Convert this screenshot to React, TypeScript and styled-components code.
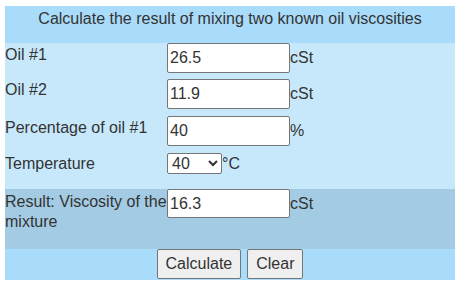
import React from "react";
import styled, { createGlobalStyle } from "styled-components";

const Global = createGlobalStyle`
  body {
    margin: 0;
    background: #ffffff;
    font-family: "Liberation Sans", Arial, sans-serif;
    font-size: 16px;
    color: #333333;
  }
`;

const Panel = styled.div`
  width: 450px;
  margin: 6px 0 0 5px;
  display: flex;
  flex-direction: column;
`;

const Header = styled.div`
  height: 37px;
  box-sizing: border-box;
  padding-top: 3px;
  background: #a9dbfa;
  text-align: center;
  line-height: 20px;
`;

const Body = styled.div`
  background: #c7e8fb;
  display: flex;
  flex-direction: column;
`;

const Row = styled.div<{ $h: number; $tone?: "result" }>`
  display: flex;
  align-items: flex-start;
  height: ${(p) => p.$h}px;
  background: ${(p) => (p.$tone === "result" ? "#a3cbe4" : "transparent")};
`;

const Label = styled.div<{ $pt?: number }>`
  width: 162px;
  flex: none;
  padding-top: ${(p) => p.$pt ?? 2}px;
  line-height: 20px;
`;

const Field = styled.div`
  display: flex;
  align-items: baseline;
`;

const Input = styled.input<{ $h?: number }>`
  width: 123px;
  height: ${(p) => p.$h ?? 30}px;
  box-sizing: border-box;
  border: 1px solid #767676;
  border-radius: 2px;
  padding: 1px 2px;
  margin: 0;
  background: #ffffff;
  font-family: "Liberation Sans", Arial, sans-serif;
  font-size: 16px;
  color: #333333;
`;

const Select = styled.select`
  width: 55px;
  height: 21px;
  box-sizing: border-box;
  margin: 0;
  font-family: "Liberation Sans", Arial, sans-serif;
  font-size: 16px;
  color: #333333;
  background: #ffffff;
  border: 1px solid #767676;
  border-radius: 2px;
`;

const Unit = styled.span`
  line-height: 20px;
`;

const Actions = styled.div`
  height: 31px;
  background: #a9dbfa;
  display: flex;
  justify-content: center;
  align-items: flex-start;
  gap: 6px;
`;

const Button = styled.button`
  height: 30px;
  padding: 0 8px;
  margin: 0;
  font-family: "Liberation Sans", Arial, sans-serif;
  font-size: 16px;
  color: #333333;
  background: #efefef;
  border: 1px solid #767676;
  border-radius: 2px;
`;

export default function App() {
  return (
    <>
      <Global />
      <Panel>
        <Header>Calculate the result of mixing two known oil viscosities</Header>
        <Body>
          <Row $h={36}>
            <Label>Oil #1</Label>
            <Field>
              <Input defaultValue="26.5" />
              <Unit>cSt</Unit>
            </Field>
          </Row>
          <Row $h={37}>
            <Label $pt={1}>Oil #2</Label>
            <Field>
              <Input defaultValue="11.9" />
              <Unit>cSt</Unit>
            </Field>
          </Row>
          <Row $h={37}>
            <Label $pt={2}>Percentage of oil #1</Label>
            <Field>
              <Input defaultValue="40" />
              <Unit>%</Unit>
            </Field>
          </Row>
          <Row $h={36}>
            <Label $pt={1}>Temperature</Label>
            <Field>
              <Select defaultValue="40">
                <option value="40">40</option>
                <option value="100">100</option>
              </Select>
              <Unit>°C</Unit>
            </Field>
          </Row>
          <Row $h={60} $tone="result">
            <Label $pt={3}>Result: Viscosity of the mixture</Label>
            <Field>
              <Input $h={29} defaultValue="16.3" readOnly />
              <Unit>cSt</Unit>
            </Field>
          </Row>
        </Body>
        <Actions>
          <Button type="button">Calculate</Button>
          <Button type="button">Clear</Button>
        </Actions>
      </Panel>
    </>
  );
}
